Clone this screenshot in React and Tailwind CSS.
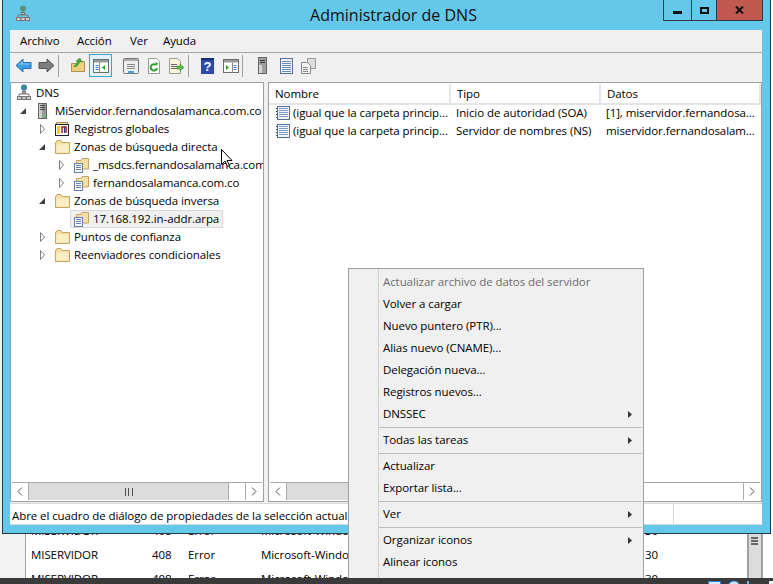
import React from "react";

const DnsIcon = ({ gray }) => (
  <svg width="16" height="18" viewBox="0 0 16 18" className="shrink-0">
    <circle cx="8" cy="3.5" r="3" fill={gray ? "#5f8f80" : "#2f7fb5"} />
    <path d="M6 2.500h3v2H7z" fill="#4fa04f" />
    <path d="M8 6v3M3 12v-2h10v2" stroke="#777" fill="none" />
    <rect x="6.500" y="7.500" width="3" height="2" fill="#b9b9b9" stroke="#777" />
    <rect x="1.500" y="12.500" width="4" height="3" fill="#cfcfcf" stroke="#777" />
    <rect x="10.500" y="12.500" width="4" height="3" fill="#cfcfcf" stroke="#777" />
    <rect x="6" y="12.500" width="4" height="3" fill="#cfcfcf" stroke="#777" />
  </svg>
);

const ServerIcon = () => (
  <svg width="16" height="18" viewBox="0 0 16 18" className="shrink-0">
    <rect x="3.500" y="1.500" width="8" height="15" fill="#9a9a9a" stroke="#666" />
    <rect x="4" y="2" width="3" height="14" fill="#d0d0d0" />
    <path d="M5 3.500h5M5 5.500h5M5 7.500h5" stroke="#444" />
    <rect x="8" y="13" width="2" height="2" fill="#50d050" />
  </svg>
);

const FolderIcon = () => (
  <svg width="16" height="16" viewBox="0 0 16 16" className="shrink-0">
    <path d="M1.500 3.500V14.500H15.500V3.500H8L7 1.500H3L2 3.500Z" fill="#f6dfa0" stroke="#c4a566" />
    <path d="M2.500 5.500h12v8h-12z" fill="#fbeec4" />
  </svg>
);

const ZoneIcon = () => (
  <svg width="16" height="16" viewBox="0 0 16 16" className="shrink-0">
    <path d="M3.500 3.500V12H15.500V1.500H9L8 3.500Z" fill="#f6dfa0" stroke="#c4a566" />
    <rect x="1.500" y="6.500" width="8" height="9" fill="#fff" stroke="#5f7fa8" />
    <path d="M3 8.500h5M3 10.500h5M3 12.500h5" stroke="#5f7fa8" />
  </svg>
);

const GlobalIcon = () => (
  <svg width="16" height="16" viewBox="0 0 16 16" className="shrink-0">
    <path d="M2.500 1.500h11v2h-11z" fill="#f6dfa0" stroke="#a08a50" />
    <rect x="1.500" y="3.500" width="13" height="11" fill="#fff" stroke="#222" />
    <rect x="3" y="5" width="3" height="8" fill="#f4d020" />
    <path d="M8 12V6h4v6" stroke="#b01818" strokeWidth="1.5" fill="none" />
    <path d="M10.500 6v6" stroke="#2040a0" />
  </svg>
);

const RecordIcon = () => (
  <svg width="16" height="16" viewBox="0 0 16 16" className="shrink-0">
    <rect x="2.500" y="1.500" width="12" height="13" fill="#f2f6fb" stroke="#54709c" />
    <path d="M4 3.500h9M4 5.500h9M4 7.500h9M4 9.500h9M4 11.500h9" stroke="#7f9cc4" />
    <path d="M1 3.500h2M1 6.500h2M1 9.500h2M1 12.500h2" stroke="#555" />
  </svg>
);

const ArrowLeft = ({ color, edge }) => (
  <svg width="17" height="15" viewBox="0 0 17 15">
    <path d="M1 7.500 8 1v3.500h8v6H8V14Z" fill={color} stroke={edge} />
    <path d="M3 7 8 3v2.500h7v1H4Z" fill="#fff" opacity="0.4" />
  </svg>
);

const ArrowRight = ({ color, edge }) => (
  <svg width="17" height="15" viewBox="0 0 17 15">
    <path d="M16 7.500 9 1v3.500H1v6h8V14Z" fill={color} stroke={edge} />
  </svg>
);

const PaneWindow = ({ side }) => (
  <svg width="16" height="14" viewBox="0 0 16 14">
    <rect x="0.500" y="0.500" width="15" height="13" fill="#fff" stroke="#6b6b6b" />
    <rect x="1" y="1" width="14" height="2.500" fill="#9a9a9a" />
    {side === "left" ? (
      <>
        <path d="M6.500 3.500v10" stroke="#8a8a8a" />
        <path d="M2.500 6.500h3M2.500 8.500h3M2.500 10.500h3" stroke="#3a78c8" />
        <path d="M12 6v5L9 8.500Z" fill="#2ca02c" />
      </>
    ) : (
      <>
        <path d="M9.500 3.500v10" stroke="#8a8a8a" />
        <path d="M10.500 6.500h3M10.500 8.500h3M10.500 10.500h3" stroke="#3a78c8" />
        <path d="M3 6v5l3-2.500Z" fill="#2ca02c" />
      </>
    )}
  </svg>
);

const ToolSep = () => <div className="w-px h-[22px] bg-[#a0a0a0] mr-[7px] shrink-0" />;

const Slot = ({ pressed, children }) => (
  <div
    className={`w-[23px] h-[23px] flex items-center justify-center shrink-0 border ${
      pressed ? "bg-[#e5f1fb] border-[#3c9fd6]" : "border-transparent"
    }`}
  >
    {children}
  </div>
);

const Toolbar = () => (
  <div className="h-[30px] flex items-center pl-[2px] pb-[4px] bg-[#f0f0f0] border-t border-[#a9a9a9] shrink-0">
    <Slot><ArrowLeft color="#3d9fe6" edge="#2a70b0" /></Slot>
    <Slot><ArrowRight color="#7d7d7d" edge="#555" /></Slot>
    <ToolSep />
    <Slot>
      <svg width="16" height="15" viewBox="0 0 16 15">
        <path d="M1.500 5.500h5l1-2h7v10h-13Z" fill="#f2cf7c" stroke="#b08f50" />
        <path d="M4 8C6 7 7 5 8 3L6 3 10 0l2 4-2-.5C9 6 7 9 4 9Z" fill="#45b03c" stroke="#2c8028" strokeWidth="0.5" />
      </svg>
    </Slot>
    <Slot pressed><PaneWindow side="left" /></Slot>
    <div className="w-[7px] shrink-0" />
    <Slot>
      <svg width="16" height="16" viewBox="0 0 16 16">
        <rect x="0.500" y="0.500" width="15" height="15" rx="1" fill="#eee" stroke="#777" />
        <rect x="1" y="1" width="14" height="2" fill="#aaa" />
        <path d="M4 6.500h8M4 8.500h8M4 10.500h8" stroke="#8a8a8a" />
        <rect x="5" y="13" width="6" height="2" fill="#49a5e0" />
      </svg>
    </Slot>
    <Slot>
      <svg width="14" height="16" viewBox="0 0 14 16">
        <path d="M1.500 0.500h8l3 3v12h-11Z" fill="#fff" stroke="#999" />
        <path d="M10 10a3.200 3.200 0 1 1-1-3" fill="none" stroke="#2ca02c" strokeWidth="2" />
        <path d="M8 4l3 1-1 3Z" fill="#2ca02c" />
      </svg>
    </Slot>
    <Slot>
      <svg width="17" height="16" viewBox="0 0 17 16">
        <path d="M1.500 0.500h8l3 3v12h-11Z" fill="#fdf5dc" stroke="#999" />
        <path d="M3 6.500h6M3 8.500h6M3 10.500h6" stroke="#666" />
        <path d="M9 8h3V6l4 3.500L12 13v-2H9Z" fill="#58c040" stroke="#2c8028" strokeWidth="0.5" />
      </svg>
    </Slot>
    <ToolSep />
    <Slot>
      <div className="w-[13px] h-[16px] flex items-center justify-center bg-[#2c4ba8] border-t-2 border-[#152c78] text-[13px] font-bold text-white font-['Liberation_Sans',sans-serif]">
        ?
      </div>
    </Slot>
    <Slot><PaneWindow side="right" /></Slot>
    <ToolSep />
    <div className="w-px shrink-0" />
    <Slot>
      <svg width="9" height="17" viewBox="0 0 9 17">
        <rect x="0.500" y="0.500" width="8" height="16" fill="#a0a0a0" stroke="#666" />
        <path d="M2 3.500h5M2 5.500h5" stroke="#333" />
        <rect x="1" y="8" width="3" height="8" fill="#d5d5d5" />
      </svg>
    </Slot>
    <Slot>
      <svg width="14" height="16" viewBox="0 0 14 16">
        <rect x="1.500" y="0.500" width="12" height="15" fill="#f2f6fb" stroke="#54709c" />
        <path d="M3 3.500h9M3 5.500h9M3 7.500h9M3 9.500h9M3 11.500h9M3 13.500h9" stroke="#6d8ab4" />
      </svg>
    </Slot>
    <Slot>
      <svg width="15" height="16" viewBox="0 0 15 16">
        <path d="M6.500 0.500h8v10h-8z" fill="#ddd" stroke="#999" />
        <path d="M0.500 4.500h6l3 3v8h-9Z" fill="#f4f4f4" stroke="#888" />
        <path d="M2 9.500h5M2 11.500h5M2 13.500h5" stroke="#888" />
      </svg>
    </Slot>
  </div>
);

const Expander = ({ state }) => {
  if (state === "open") {
    return (
      <svg width="6" height="6" viewBox="0 0 6 6">
        <path d="M6 0v6H0Z" fill="#404040" />
      </svg>
    );
  }
  if (state === "closed") {
    return (
      <svg width="5" height="10" viewBox="0 0 5 10">
        <path d="M0.500 0.500 4.500 5 0.500 9.500Z" fill="#fff" stroke="#808080" />
      </svg>
    );
  }
  return null;
};

const TreeRow = ({ indent, state, icon, label, selected }) => (
  <div className={`h-[18px] flex items-center whitespace-nowrap ${indent}`}>
    {state !== "root" && (
      <div className="w-[19px] pr-[6px] flex justify-end shrink-0">
        <Expander state={state} />
      </div>
    )}
    <div
      className={`h-[18px] flex items-center pl-[2px] pr-[3px] border ${
        selected ? "bg-[#f0f0f0] border-[#d9d9d9]" : "border-transparent"
      }`}
    >
      <div className="w-[20px] shrink-0 flex">{icon}</div>
      <span>{label}</span>
    </div>
  </div>
);

const ScrollBtn = ({ dir }) => (
  <div className="w-[16px] h-[16px] shrink-0 flex items-center justify-center bg-white">
    <svg width="6" height="9" viewBox="0 0 6 9">
      <path d={dir === "left" ? "M5 .5 1 4.500 5 8.500" : "M1 .5 5 4.500 1 8.500"} fill="none" stroke="#505050" />
    </svg>
  </div>
);

const HScroll = ({ thumb }) => (
  <div className="h-[18px] mx-px mb-px flex items-center bg-white border-t border-[#ababab] shrink-0">
    <ScrollBtn dir="left" />
    <div className={`${thumb} h-full flex items-center justify-center bg-[#dcdcdc] border-x border-[#ababab] shrink-0`}>
      <div className="w-[8px] h-[8px] flex justify-between">
        <div className="w-px bg-[#505050]" />
        <div className="w-px bg-[#505050]" />
        <div className="w-px bg-[#505050]" />
      </div>
    </div>
    <div className="flex-1" />
    <div className="border-l border-[#ababab] h-full flex items-center"><ScrollBtn dir="right" /></div>
  </div>
);

const HeaderCell = ({ width, children }) => (
  <div className={`${width} h-[19px] flex items-center pl-[6px] bg-white border-r-2 border-[#e5e5e5] shrink-0`}>{children}</div>
);

const ListRow = ({ name, type, data }) => (
  <div className="h-[18px] pb-[2px] flex items-center whitespace-nowrap">
    <div className="w-[182px] flex items-center pl-[6px] shrink-0">
      <RecordIcon />
      <span className="ml-[2px]">{name}</span>
    </div>
    <div className="w-[150px] pl-[5px] shrink-0">{type}</div>
    <div className="pl-[5px]">{data}</div>
  </div>
);

const MenuItem = ({ label, disabled, sub }) => (
  <div className="h-[22px] flex items-center justify-between pl-[34px] pr-[11px]">
    <span className={disabled ? "text-[#6d6d6d]" : "text-black"}>{label}</span>
    {sub && (
      <svg width="4" height="7" viewBox="0 0 4 7">
        <path d="M0 0 4 3.500 0 7Z" fill="#333" />
      </svg>
    )}
  </div>
);

const MenuSep = () => (
  <div className="h-[4px] pl-[30px] pr-[1px] flex items-center">
    <div className="h-px w-full bg-[#bdbdbd]" />
  </div>
);

const BackRow = () => (
  <div className="h-[24px] flex items-center whitespace-nowrap text-black">
    <div className="w-[126px] pl-[5px] shrink-0">MISERVIDOR</div>
    <div className="w-[36px] shrink-0">408</div>
    <div className="w-[73px] shrink-0">Error</div>
    <div className="w-[384px] shrink-0">Microsoft-Windows</div>
    <div className="shrink-0">30</div>
  </div>
);

export default function App() {
  return (
    <div className="relative w-[773px] h-[584px] overflow-hidden bg-white text-[11.5px] tracking-[-0.08px] leading-none text-black font-['Open_Sans','Liberation_Sans',sans-serif]">
      {/* event list behind the console window */}
      <div className="h-[578px] flex overflow-hidden">
        <div className="w-[26px] bg-[#f3f3f3] border-r border-[#a0a0a0] shrink-0" />
        <div className="flex-1 pt-[519px] overflow-hidden">
          <BackRow />
          <BackRow />
          <BackRow />
        </div>
        <div className="w-[16px] mr-[10px] bg-[#dcdcdc] border-x-2 border-[#a0a0a0] shrink-0 pt-[537px] pl-[2px]">
          <div className="w-[7px] flex flex-col gap-px">
            <div className="h-[2px] bg-[#666]" />
            <div className="h-[2px] bg-[#666]" />
            <div className="h-[2px] bg-[#666]" />
          </div>
        </div>
      </div>

      {/* DNS manager window */}
      <div className="absolute left-[2px] top-0 w-[769px] h-[534px] flex flex-col bg-[#64c8ea] border-x border-b border-[#2b3a45] pl-[7px] pr-[8px] pb-[8px]">
        <div className="h-[30px] relative flex items-center justify-center shrink-0">
          <div className="absolute left-[5px] top-[5px]"><DnsIcon gray /></div>
          <span className="text-[16px] ml-[15px] tracking-normal text-[#111]">Administrador de DNS</span>
          <div className="absolute right-[-1px] top-0 h-[21px] flex border-x border-b border-[#2b3a45]">
            <div className="w-[28px] flex items-center justify-center border-r border-[#2b3a45]">
              <div className="w-[9px] h-[3px] bg-[#111] mt-[4px]" />
            </div>
            <div className="w-[25px] flex items-center justify-center border-r border-[#2b3a45]">
              <div className="w-[9px] h-[7px] border-2 border-[#111]" />
            </div>
            <div className="w-[45px] flex items-center justify-center bg-[#c05a50]">
              <svg width="9" height="8" viewBox="0 0 9 8">
                <path d="M1 0.500 8 7.500M8 0.500 1 7.500" stroke="#111" strokeWidth="2" />
              </svg>
            </div>
          </div>
        </div>

        <div className="flex-1 flex flex-col bg-[#f0f0f0] min-h-0">
          <div className="h-[22px] flex items-center bg-[#f0f0f0] pl-[10px] shrink-0">
            <span className="w-[57px]">Archivo</span>
            <span className="w-[53px]">Acción</span>
            <span className="w-[33px]">Ver</span>
            <span>Ayuda</span>
          </div>
          <Toolbar />

          <div className="flex-1 flex gap-[4px] min-h-0">
            <div className="w-[254px] flex flex-col bg-white border border-[#a0a0a0] shrink-0">
              <div className="flex-1 overflow-hidden pt-px">
                <TreeRow indent="pl-[2px]" state="root" icon={<DnsIcon />} label="DNS" />
                <TreeRow indent="pl-[2px]" state="open" icon={<ServerIcon />} label="MiServidor.fernandosalamanca.com.co" />
                <TreeRow indent="pl-[21px]" state="closed" icon={<GlobalIcon />} label="Registros globales" />
                <TreeRow indent="pl-[21px]" state="open" icon={<FolderIcon />} label="Zonas de búsqueda directa" />
                <TreeRow indent="pl-[40px]" state="closed" icon={<ZoneIcon />} label="_msdcs.fernandosalamanca.com" />
                <TreeRow indent="pl-[40px]" state="closed" icon={<ZoneIcon />} label="fernandosalamanca.com.co" />
                <TreeRow indent="pl-[21px]" state="open" icon={<FolderIcon />} label="Zonas de búsqueda inversa" />
                <TreeRow indent="pl-[40px]" state="none" icon={<ZoneIcon />} label="17.168.192.in-addr.arpa" selected />
                <TreeRow indent="pl-[21px]" state="closed" icon={<FolderIcon />} label="Puntos de confianza" />
                <TreeRow indent="pl-[21px]" state="closed" icon={<FolderIcon />} label="Reenviadores condicionales" />
              </div>
              <HScroll thumb="w-[201px]" />
            </div>

            <div className="flex-1 flex flex-col bg-white border border-[#a0a0a0] min-w-0">
              <div className="flex-1 overflow-hidden">
                <div className="flex mt-px border-b-2 border-[#e5e5e5]">
                  <HeaderCell width="w-[182px]">Nombre</HeaderCell>
                  <HeaderCell width="w-[150px]">Tipo</HeaderCell>
                  <HeaderCell width="w-[160px]">Datos</HeaderCell>
                </div>
                <ListRow name="(igual que la carpeta princip..." type="Inicio de autoridad (SOA)" data="[1], miservidor.fernandosa..." />
                <ListRow name="(igual que la carpeta princip..." type="Servidor de nombres (NS)" data="miservidor.fernandosalam..." />
              </div>
              <HScroll thumb="w-[300px]" />
            </div>
          </div>

          <div className="h-[22px] mt-px flex bg-white border-y border-[#d9d9d9] shrink-0">
            <div className="w-[664px] flex items-center pl-[2px] pt-[3px] border-r border-[#d9d9d9] whitespace-nowrap">
              Abre el cuadro de diálogo de propiedades de la selección actual.
            </div>
          </div>
        </div>
      </div>

      {/* pointer */}
      <svg width="12" height="19" viewBox="0 0 12 19" className="absolute left-[221px] top-[149px]">
        <path d="M.5.500v15l3.500-3.500 2.500 5.500 2-1-2.500-5h5Z" fill="#fff" stroke="#000" />
      </svg>

      {/* context menu */}
      <div className="absolute left-[348px] top-[268px] w-[296px] h-[320px] pt-[2px] bg-[#f0f0f0] border border-[#a0a0a0]">
        <div className="absolute left-[29px] top-0 bottom-0 w-px bg-[#d0d0d0]" />
        <MenuItem label="Actualizar archivo de datos del servidor" disabled />
        <MenuItem label="Volver a cargar" />
        <MenuItem label="Nuevo puntero (PTR)..." />
        <MenuItem label="Alias nuevo (CNAME)..." />
        <MenuItem label="Delegación nueva..." />
        <MenuItem label="Registros nuevos..." />
        <MenuItem label="DNSSEC" sub />
        <MenuSep />
        <MenuItem label="Todas las tareas" sub />
        <MenuSep />
        <MenuItem label="Actualizar" />
        <MenuItem label="Exportar lista..." />
        <MenuSep />
        <MenuItem label="Ver" sub />
        <MenuSep />
        <MenuItem label="Organizar iconos" sub />
        <MenuItem label="Alinear iconos" />
      </div>

      {/* taskbar, only its top edge is in the shot */}
      <div className="absolute left-0 right-0 top-[578px] h-[6px] pl-[708px] bg-[#3a3a3a] overflow-hidden">
        <svg width="65" height="6" viewBox="0 0 65 6" className="block">
          <rect x="0.500" y="3.500" width="12" height="6" fill="#d8ecff" stroke="#2f7fd8" />
          <circle cx="26" cy="9" r="6" fill="#cfe4fa" stroke="#2f7fd8" />
          <path d="M39 3h2v3h4v1h-6Z" fill="#6fb0ee" />
          <rect x="61" y="3" width="4" height="3" fill="#eee" />
        </svg>
      </div>
    </div>
  );
}
